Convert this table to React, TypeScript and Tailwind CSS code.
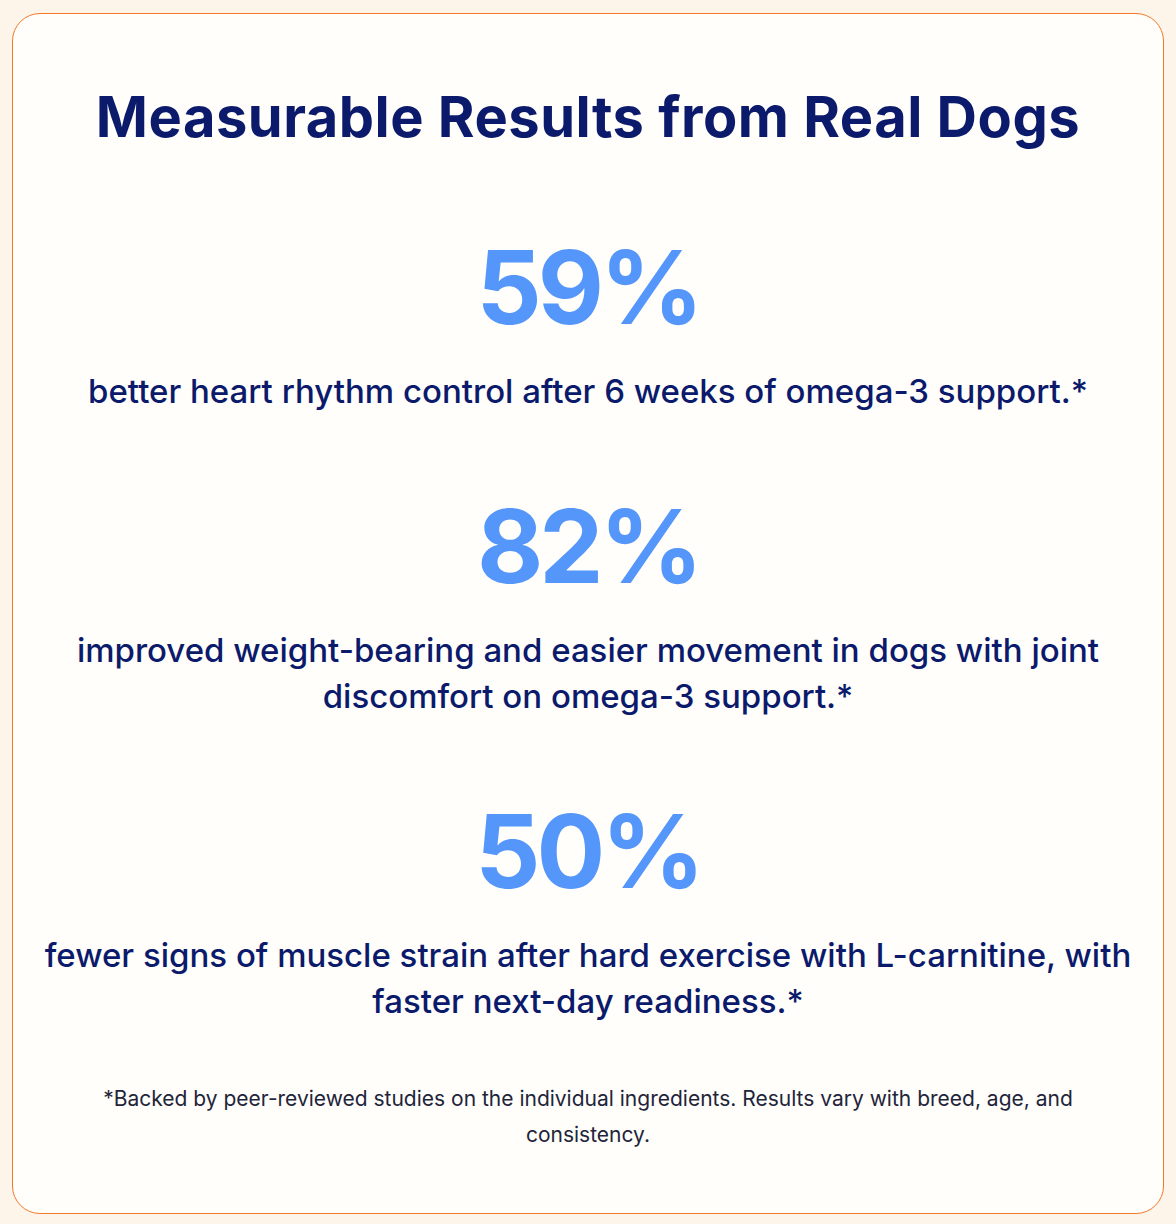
const STATS = [
  { value: "59%", text: "better heart rhythm control after 6 weeks of omega-3 support.*" },
  { value: "82%", text: "improved weight-bearing and easier movement in dogs with joint discomfort on omega-3 support.*" },
  { value: "50%", text: "fewer signs of muscle strain after hard exercise with L-carnitine, with faster next-day readiness.*" },
];

export default function App() {
  return (
    <div className="min-h-[1224px] bg-[#fdf4ea] px-3 pt-[13px] pb-[10px] font-['Inter',sans-serif]">
      <div className="rounded-[28px] border border-[#f2782a] bg-[#fffefb] px-[30px] pt-[70px] pb-[60px] text-center">
        <h1 className="text-[56px] font-bold leading-[67px] tracking-[0.5px] text-[#0b1a6b]">
          Measurable Results from Real Dogs
        </h1>

        <div className="mt-[85px] flex flex-col gap-[81px]">
          {STATS.map((s) => (
            <div key={s.value} className="flex flex-col items-center">
              <p className="text-[102px] font-bold leading-none tracking-[-4px] text-[#5596fa]">{s.value}</p>
              <p className="mt-[30px] text-[33px] font-medium leading-[46px] text-[#0b1a6b]">
                {s.text}
              </p>
            </div>
          ))}
        </div>

        <p className="mx-auto mt-[57px] max-w-[1000px] text-[21px] leading-[36px] text-[#22243a]">
          *Backed by peer-reviewed studies on the individual ingredients. Results vary with breed, age, and consistency.
        </p>
      </div>
    </div>
  );
}
